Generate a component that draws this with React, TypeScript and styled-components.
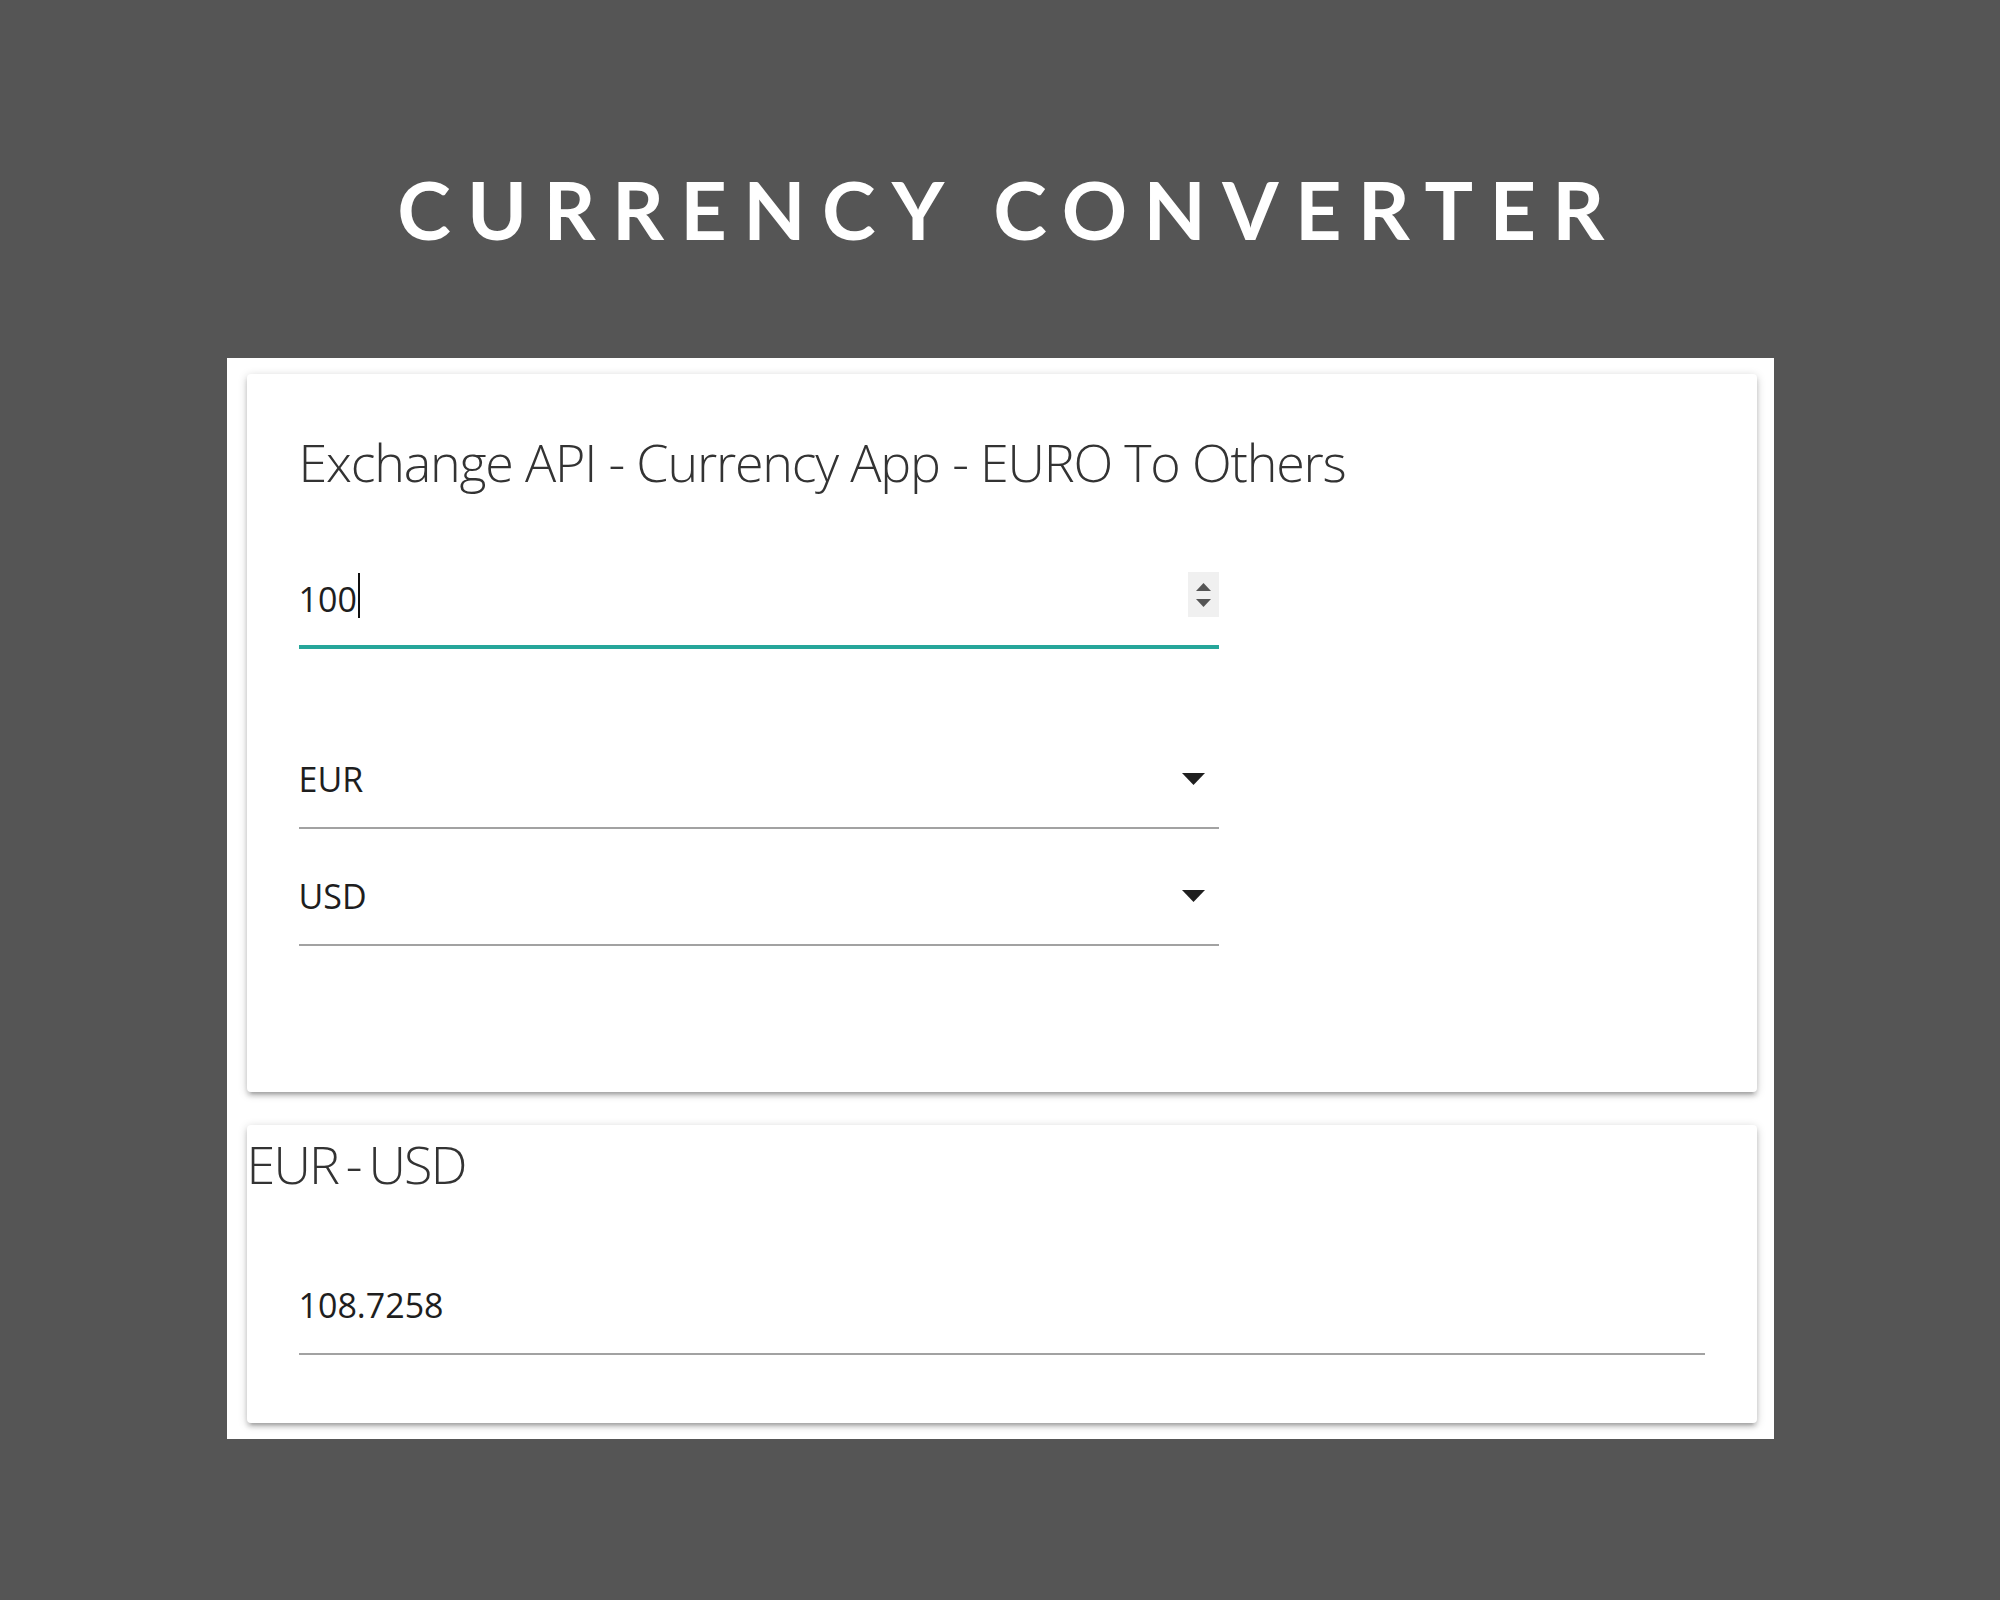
import React from 'react';
import styled, { createGlobalStyle } from 'styled-components';

const GlobalStyle = createGlobalStyle`
  html, body {
    margin: 0;
    padding: 0;
    background: #555555;
  }
  body {
    font-family: "Open Sans", "Noto Sans", sans-serif;
  }
`;

const Page = styled.div`
  min-height: 1600px;
  box-sizing: border-box;
  padding-top: 160px;
  display: flex;
  flex-direction: column;
  align-items: center;
`;

const Title = styled.h1`
  margin: 0 0 101px;
  padding-left: 18px;
  font-family: "Lato", "Open Sans", sans-serif;
  font-weight: 700;
  font-size: 81px;
  line-height: 97px;
  letter-spacing: 16.3px;
  color: #ffffff;
  text-transform: uppercase;
  white-space: nowrap;
`;

const Panel = styled.section`
  width: 1547px;
  box-sizing: border-box;
  background: #ffffff;
  padding: 16px 17px 16px 20px;
  display: flex;
  flex-direction: column;
  gap: 33px;
`;

const Card = styled.div<{ $pad: string }>`
  background: #ffffff;
  border-radius: 4px;
  padding: ${(p) => p.$pad};
  display: flex;
  flex-direction: column;
  box-shadow: 0 4px 4px 0 rgba(0, 0, 0, 0.14), 0 6px 2px -4px rgba(0, 0, 0, 0.12),
    0 2px 10px 0 rgba(0, 0, 0, 0.2);
`;

const CardTitle = styled.h2<{ $wordGap?: number; $track?: number }>`
  margin: 0;
  font-family: "Open Sans", "Noto Sans", sans-serif;
  font-weight: 300;
  font-size: 52px;
  line-height: 69px;
  letter-spacing: ${(p) => p.$track ?? -1.2}px;
  word-spacing: ${(p) => p.$wordGap ?? 0}px;
  color: #333333;
  white-space: nowrap;
`;

const Field = styled.div<{ $focused?: boolean; $width?: string; $gap: number; $inset?: number }>`
  display: flex;
  align-items: center;
  height: 104px;
  width: ${(p) => p.$width ?? 'auto'};
  margin-top: ${(p) => p.$gap}px;
  margin-left: ${(p) => p.$inset ?? 0}px;
  border-bottom: ${(p) => (p.$focused ? '4px solid #26a69a' : '2px solid #a2a2a2')};
`;

const ValueText = styled.span`
  flex: 1;
  font-family: "Open Sans", "Noto Sans", sans-serif;
  font-size: 34px;
  line-height: 47px;
  padding-top: 9px;
  color: #1e1e1e;
  white-space: nowrap;
`;

const TextCursor = styled.span`
  display: inline-block;
  width: 2px;
  height: 45px;
  margin-left: 1px;
  vertical-align: -6px;
  background: #111111;
`;

const Spinner = styled.div`
  width: 31px;
  height: 45px;
  margin-top: 3px;
  background: #f0f0f0;
  display: flex;
  flex-direction: column;
  align-items: center;
  justify-content: center;
  gap: 8px;
`;

const SelectCaret = styled.svg`
  width: 23px;
  height: 12px;
  margin: 8px 14px 0 0;
  flex: none;
`;

const SpinArrow = styled.svg`
  width: 15px;
  height: 8px;
  display: block;
`;

const Arrow = ({ up }: { up?: boolean }) => (
  <SpinArrow viewBox="0 0 15 8">
    <polygon points={up ? '7.5,0 15,8 0,8' : '0,0 15,0 7.5,8'} fill="#555555" />
  </SpinArrow>
);

const Caret = () => (
  <SelectCaret viewBox="0 0 23 12">
    <polygon points="0,0 23,0 11.5,12" fill="#1f1f1f" />
  </SelectCaret>
);

export default function App() {
  return (
    <>
      <GlobalStyle />
      <Page>
        <Title>Currency Converter</Title>
        <Panel>
          <Card $pad="53px 52px 146px">
            <CardTitle>Exchange API - Currency App - EURO To Others</CardTitle>
            <Field $focused $width="920px" $gap={45}>
              <ValueText>
                100
                <TextCursor />
              </ValueText>
              <Spinner>
                <Arrow up />
                <Arrow />
              </Spinner>
            </Field>
            <Field $width="920px" $gap={74}>
              <ValueText>EUR</ValueText>
              <Caret />
            </Field>
            <Field $width="920px" $gap={11}>
              <ValueText>USD</ValueText>
              <Caret />
            </Field>
          </Card>
          <Card $pad="4px 52px 68px 0">
            <CardTitle $wordGap={-4} $track={-1.8}>EUR - USD</CardTitle>
            <Field $gap={51} $inset={52}>
              <ValueText>108.7258</ValueText>
            </Field>
          </Card>
        </Panel>
      </Page>
    </>
  );
}
